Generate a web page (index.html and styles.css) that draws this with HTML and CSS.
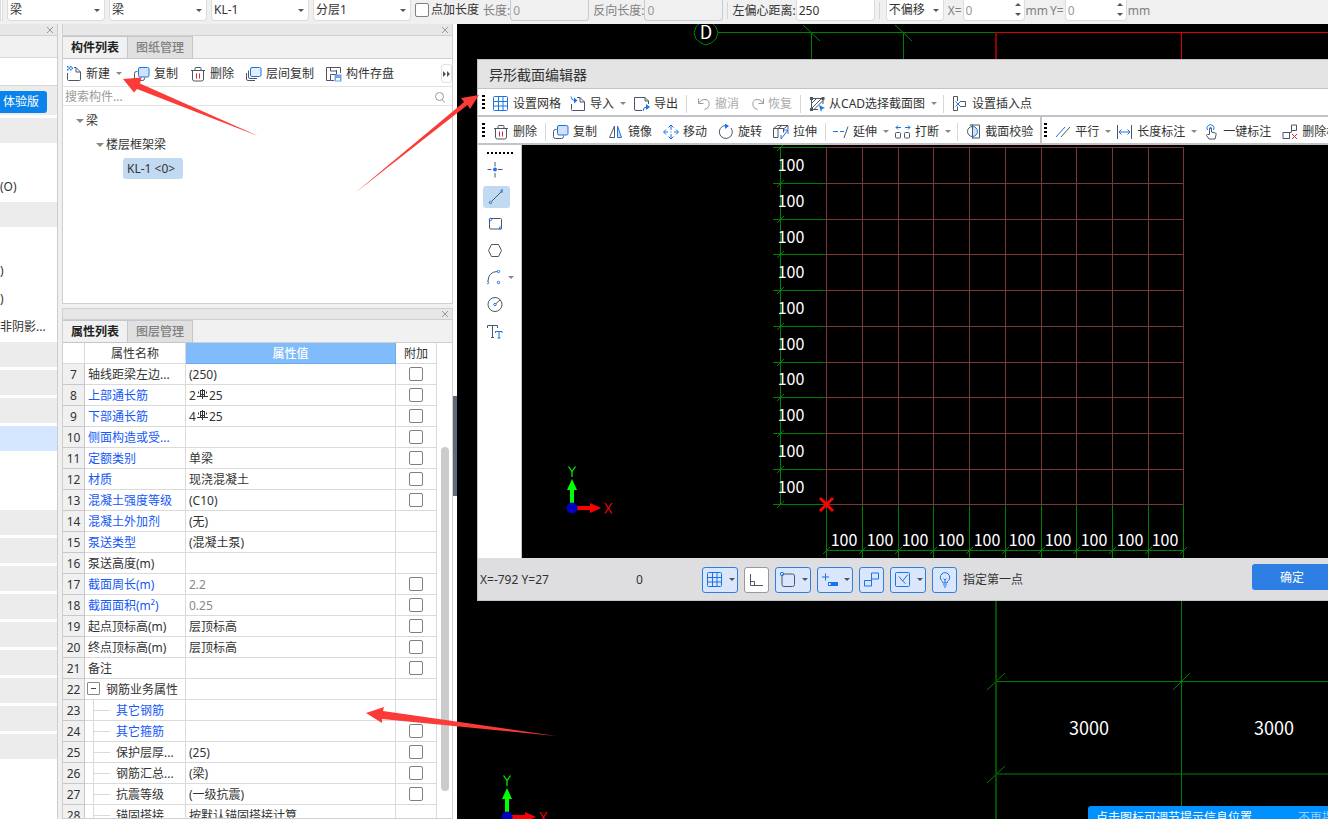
FILE: index.html
```
<!DOCTYPE html>
<html lang="zh-CN">
<head>
<meta charset="utf-8">
<title>异形截面编辑器</title>
<link rel="stylesheet" href="styles.css">
</head>
<body>
<svg class="defs" aria-hidden="true">
  <symbol id="i-new" viewBox="0 0 16 16"><path class="g" d="M1.500 7v6.500q0 1 1 1h11q1 0 1-1V6L10 1.500H8M10 1.500V6h4.500"/><path class="bf" d="M1 0h1.500v1.500H1zM4 0h1.500v1.500H4zM2.500 1.500H4V3H2.500zM1 3h1.500v1.500H1zM4 3h1.500v1.500H4zM5.500 1.500H7V3H5.500z"/></symbol>
  <symbol id="i-copy" viewBox="0 0 16 16"><path class="g" d="M3.500 5.500h-1q-2 0-2 2v5q0 2 2 2h6q2 0 2-2v-1"/><rect class="bl" x="4.500" y="1.500" width="10.500" height="9.500" rx="1.500"/></symbol>
  <symbol id="i-layers" viewBox="0 0 16 16"><path class="g" d="M.5 7v6q0 1.500 1.500 1.500h7M2.500 4.500v6.500q0 1.500 1.500 1.500h7"/><rect class="bl pale" x="4.500" y="1.500" width="10.500" height="9" rx="1.500"/></symbol>
  <symbol id="i-del" viewBox="0 0 16 16"><path class="g" d="M1 4.500h14M5 4V2.500q0-1 1-1h4q1 0 1 1V4M2.500 4.500V13q0 2 2 2h7q2 0 2-2V4.500"/><path class="r" d="M6.500 7.500v5M9.500 7.500v5"/></symbol>
  <symbol id="i-save" viewBox="0 0 16 16"><path class="g" d="M8 14.500H4.500V8.500M4.500 14.500h-4V1.500h14V7M4.500 1.500v3.500h6M4.500 8.500h6M10.500 4v4.500"/><path class="bs" d="M8.500 8.500h7v7h-7z"/><path fill="#fff" d="M10 12h4v2.500h-4z"/></symbol>
  <symbol id="i-grid" viewBox="0 0 16 16"><rect class="b" x=".5" y=".5" width="14" height="14" rx="1"/><path class="b" d="M5.500.5v14M10 .5v14M.5 5.500h14M.5 10h14"/></symbol>
  <symbol id="i-import" viewBox="0 0 16 16"><path class="g" d="M1.500 8v5.500q0 1 1 1h12V6L10 1.500H7M10 1.500V6h4.500"/><path class="b" d="M1 .5q0 4 4 4"/><path class="bf" d="M4 1.500 7.500 4.500 4 7.500z"/></symbol>
  <symbol id="i-export" viewBox="0 0 16 16"><path class="g" d="M8 14.500H2q-1.500 0-1.500-1.500V1.500H11L14.500 5v3M11 1.500V5h3.500"/><path class="b" d="M9 15q0-4 4-4"/><path class="bf" d="m12 8 4 3-4 3z"/></symbol>
  <symbol id="i-undo" viewBox="0 0 16 16"><path class="d" d="M3.500 2.500v5h5M3.500 7Q7 2.500 11 3.500q4 1.500 3 6Q13 13 9.500 13.500"/></symbol>
  <symbol id="i-redo" viewBox="0 0 16 16"><path class="d" d="M15.500 2.500v5h-5M15.500 7Q12 2.500 8 3.500q-4 1.500-3 6Q6 13 9.500 13.500"/></symbol>
  <symbol id="i-cad" viewBox="0 0 16 16"><path class="g" d="M3 2.500h10M2.500 3v10M14 3v5M3 13.500h6M2.500 7.500l5-5M2.500 12.500l10-10M5 13.500l9-9"/><path class="gf" d="M1 1h3v3H1zM12.500 1h3v3h-3zM1 12h3v3H1z"/><path class="bf" d="m10 9 6 3-3 1-1 3z"/></symbol>
  <symbol id="i-insert" viewBox="0 0 16 16"><path class="g" d="M5.500 5V.500h-4v14h4V10.500M8 5.500h5.500v5H8"/><path class="b" d="m3.500 5.500 5 5m0-5-5 5"/></symbol>
  <symbol id="i-mirror" viewBox="0 0 16 16"><path class="g" d="M6.500 2v11.500h-5z"/><path class="bl" d="M9.500 2v11.500h4z"/></symbol>
  <symbol id="i-move" viewBox="0 0 16 16"><path class="b" d="M8 1v5M8 10v5M1 8h4M11 8h4M5.500 3.500 8 1l2.500 2.500M5.500 12.500 8 15l2.500-2.500M3 5.500.5 8 3 10.500M13 5.500 15.500 8 13 10.500M8 7.500v1"/></symbol>
  <symbol id="i-rotate" viewBox="0 0 16 16"><path class="g" d="M7 1.500A6.500 6.500 0 1 0 13 4"/><path class="bf" d="m7-.5 4 2.500-4 3z"/></symbol>
  <symbol id="i-stretch" viewBox="0 0 16 16"><path class="g" d="M.5 4.500v9H5v-9zM.5 4.500l4-3h10.500v4M5 4.500l4-3M5 4.500h6M11 4.500 15 1.500M10.500 4.500v4"/><path class="b" d="m8 15 7-9M15 6v4M15 6h-4M8 15v-4"/></symbol>
  <symbol id="i-extend" viewBox="0 0 16 16"><path class="b" d="M0 7.500h5M7 7.500h4"/><path class="g" d="M15 2.500 11 14"/></symbol>
  <symbol id="i-break" viewBox="0 0 16 16"><path class="b" d="M1 3.500h5M10 3.500h5M3 1.500l-2 2 2 2M13 1.500l2 2-2 2"/><rect class="g" x=".5" y="8.500" width="5" height="5.500" rx="1"/><rect class="g" x="9.500" y="8.500" width="5" height="5.500" rx="1"/></symbol>
  <symbol id="i-check" viewBox="0 0 16 16"><path class="bl" d="M7.500 2.500a5 5 0 0 1 0 10z"/><path class="g" d="M7.500 12.500a5 5 0 1 1 0-10M7.500.5v14M5 1.500V1h9.500v13H7.500"/></symbol>
  <symbol id="i-parallel" viewBox="0 0 16 16"><path class="b" d="M1 13 10 3"/><path class="g" d="m6 13 9-10"/></symbol>
  <symbol id="i-length" viewBox="0 0 16 16"><path class="g" d="M.5 1v14M14.500 1v14"/><path class="b" d="M2 8h11M4.500 5.500 2 8l2.500 2.500M10.500 5.500 13 8l-2.500 2.500"/></symbol>
  <symbol id="i-hand" viewBox="0 0 16 16"><path class="g" d="M6.500 10.500v-6q0-1 1-1t1 1V8l4 1q1 .5.500 2l-1 4H6L3.500 11.500q0-1 1-1z"/><path class="b" d="M4.500 6a3.500 3.500 0 1 1 6 0M6.500 4.500h2"/></symbol>
  <symbol id="i-dimdel" viewBox="0 0 16 16"><path class="g" d="M9.500 1h5v5.500h-5zM9.500 6.500v2M9 8.500H1v6h7M7.500 8.500v6"/><path class="r" d="m10 10 5 5m0-5-5 5"/></symbol>
  <symbol id="i-search" viewBox="0 0 16 16"><circle class="d" cx="7.500" cy="7.500" r="4"/><path class="d" d="m10.500 11 2 2.500"/></symbol>
  <symbol id="i-close" viewBox="0 0 8 8"><path class="d" d="m1 1 6 6m0-6L1 7"/></symbol>
  <symbol id="i-point" viewBox="0 0 16 16"><path class="g" d="M8 0v4.500M8 11v4.500M.5 7.500h4M11 7.500h4.500"/><circle class="bf" cx="8" cy="7.500" r="2"/></symbol>
  <symbol id="i-line" viewBox="0 0 16 16"><path class="g" d="M4.500 12.500 14 3"/><circle class="b" cx="3.500" cy="13.500" r="1.200"/><circle class="b" cx="15" cy="2" r="1.200"/></symbol>
  <symbol id="i-rect" viewBox="0 0 16 16"><rect class="g" x="2.500" y="2.500" width="12" height="10.500" rx="1"/><circle class="b" cx="3.500" cy="3.500" r="1.200"/><circle class="b" cx="13.500" cy="12" r="1.200"/></symbol>
  <symbol id="i-hex" viewBox="0 0 16 16"><path class="g" d="M4.500 1.500h7l3 6-3 6h-7l-3-6z"/></symbol>
  <symbol id="i-arc" viewBox="0 0 16 16"><path class="g" d="M1 11Q1.500 2 10 1.500"/><circle class="b" cx=".5" cy="12.500" r="1.200"/><circle class="b" cx="11.500" cy="1.500" r="1.200"/><circle class="b" cx="11.500" cy="12.500" r="1.200"/></symbol>
  <symbol id="i-circle" viewBox="0 0 16 16"><circle class="g" cx="8" cy="7.500" r="7"/><path class="g" d="m9 6.500 4-3.500"/><circle class="b" cx="8" cy="7.500" r="1.200"/></symbol>
  <symbol id="i-text" viewBox="0 0 16 16"><path class="g" d="M.5 4V1.500h10V4M5.500 1.500v12M4 13.500h3"/><path class="b" d="M8.500 9V7.500h6.500V9M12 7.500v6.500M10.500 14h3"/></symbol>
  <symbol id="i-ortho" viewBox="0 0 16 16"><path class="g" d="M1.500 2v11.500H14M1.500 9.500h4v4"/></symbol>
  <symbol id="i-snap" viewBox="0 0 16 16"><rect class="g" x="2" y="2" width="12.500" height="12.500" rx="2"/><circle class="b" cx="2" cy="2" r="1.700"/></symbol>
  <symbol id="i-input" viewBox="0 0 16 16"><path class="b" d="M0 5h7M3.500 1.500v7"/><path class="bf" d="M6 10h10v4H6z"/><path fill="#fff" d="M7 11h1.500v2H7z"/></symbol>
  <symbol id="i-link" viewBox="0 0 16 16"><path class="b" d="M7.500 1h7V7h-7zM7.500 7v2M.5 8.500h7v5.500h-7z"/></symbol>
  <symbol id="i-angle" viewBox="0 0 16 16"><rect class="b" x=".5" y=".5" width="14" height="14" rx="1"/><path class="b" d="M4 4.500 7.500 9l5.500-6.500M7.500 9l3 2.500"/></symbol>
  <symbol id="i-bulb" viewBox="0 0 16 16"><path class="b" d="M6 11q0-1.500-1.500-2.500a4.700 4.700 0 1 1 7 0Q10 9.500 10 11zM6 13h4M7 15h2M8 11V8M6.500 6.500 8 8l1.500-1.500"/></symbol>
  <symbol id="i-rebar" viewBox="0 0 11 10"><path d="M3 1.500h5M1.500 2.500v2M9.500 2.500v2M3 5.500h5M3.500 1v7M5.500 0v10M7.500 1v7M0 7.500h11" fill="none" stroke="#333"/></symbol>
  <symbol id="i-axes" viewBox="0 0 60 60">
    <path d="M13 46V28" stroke="#0f0" stroke-width="4"/><path d="m13 18 5 11H8z" fill="#0f0"/><path d="m9.500 5.500 3.500 5 3.500-5M13 10.500V16" fill="none" stroke="#0f0" stroke-width="1.200"/>
    <path d="M18 47h14" stroke="#f00" stroke-width="4"/><path d="M31 42l11 5-11 5z" fill="#f00"/><path d="m46 42 7 10.500m0-10.500-7 10.500" stroke="#f00" stroke-width="1.200"/>
    <circle cx="13" cy="47" r="5.500" fill="#0000c0"/>
  </symbol>
</svg>

<header class="topbar">
  <span class="pick stub"></span>
  <span class="pick"><select aria-label="构件大类"><option>梁</option></select></span>
  <span class="pick"><select aria-label="构件类型"><option>梁</option></select></span>
  <span class="pick"><select aria-label="构件"><option>KL-1</option></select></span>
  <span class="pick"><select aria-label="分层"><option>分层1</option></select></span>
  <label class="tick"><input type="checkbox" class="box">点加长度</label>
  <label class="field muted">长度:<input type="text" value="0" disabled></label>
  <label class="field muted">反向长度:<input type="text" value="0" disabled></label>
  <span class="rule"></span>
  <label class="field">左偏心距离:<input type="text" value="250"></label>
  <span class="rule"></span>
  <span class="pick small"><select aria-label="偏移方式"><option>不偏移</option></select></span>
  <label class="field muted spin">X=<input type="text" value="0"><i class="arrows"></i>mm</label>
  <label class="field muted spin">Y=<input type="text" value="0"><i class="arrows"></i>mm</label>
</header>

<main class="work">
  <nav class="rail">
    <div class="dock"><button class="x" aria-label="关闭"><svg><use href="#i-close"/></svg></button></div>
    <div class="strip"></div>
    <div class="blank"></div>
    <ul class="modules">
      <li class="band"><button class="trial">体验版</button></li>
      <li class="band"></li><li></li><li>(O)</li><li class="band"></li>
      <li></li><li>)</li><li>)</li><li>非阴影...</li>
      <li class="band"></li><li class="band"></li><li class="band"></li><li class="on"></li>
      <li></li><li></li>
      <li class="band"></li><li class="band"></li><li class="band"></li><li class="band"></li><li class="band"></li>
      <li class="band"></li><li class="band"></li><li class="band"></li><li class="band"></li>
    </ul>
  </nav>

  <div class="panels">
    <section class="panel">
      <div class="dock"><button class="x" aria-label="关闭"><svg><use href="#i-close"/></svg></button></div>
      <div class="tabs"><button class="tab active">构件列表</button><button class="tab">图纸管理</button></div>
      <div class="tools">
        <button class="btn"><svg><use href="#i-new"/></svg>新建<i class="caret"></i></button>
        <button class="btn"><svg><use href="#i-copy"/></svg>复制</button>
        <button class="btn"><svg><use href="#i-del"/></svg>删除</button>
        <button class="btn"><svg><use href="#i-layers"/></svg>层间复制</button>
        <button class="btn"><svg><use href="#i-save"/></svg>构件存盘</button>
        <button class="more" aria-label="更多"><i></i><i></i></button>
      </div>
      <div class="search"><input type="search" placeholder="搜索构件..." aria-label="搜索构件"><svg><use href="#i-search"/></svg></div>
      <ul class="tree">
        <li><i class="caret"></i>梁
          <ul><li><i class="caret"></i>楼层框架梁
            <ul><li><span class="picked">KL-1 &lt;0&gt;</span></li></ul></li></ul></li>
      </ul>
    </section>

    <section class="panel props">
      <div class="dock"><button class="x" aria-label="关闭"><svg><use href="#i-close"/></svg></button></div>
      <div class="tabs"><button class="tab active">属性列表</button><button class="tab">图层管理</button></div>
      <div class="sheet">
        <table>
          <colgroup><col class="c-no"><col class="c-name"><col><col class="c-add"></colgroup>
          <thead><tr><th></th><th>属性名称</th><th class="hot">属性值</th><th>附加</th></tr></thead>
          <tbody>
            <tr><th>7</th><td>轴线距梁左边...</td><td>(250)</td><td><input type="checkbox" class="box" aria-label="附加 7"></td></tr>
            <tr class="key"><th>8</th><td>上部通长筋</td><td>2<svg class="rebar"><use href="#i-rebar"/></svg>25</td><td><input type="checkbox" class="box" aria-label="附加 8"></td></tr>
            <tr class="key"><th>9</th><td>下部通长筋</td><td>4<svg class="rebar"><use href="#i-rebar"/></svg>25</td><td><input type="checkbox" class="box" aria-label="附加 9"></td></tr>
            <tr class="key"><th>10</th><td>侧面构造或受...</td><td></td><td><input type="checkbox" class="box" aria-label="附加 10"></td></tr>
            <tr class="key"><th>11</th><td>定额类别</td><td>单梁</td><td><input type="checkbox" class="box" aria-label="附加 11"></td></tr>
            <tr class="key"><th>12</th><td>材质</td><td>现浇混凝土</td><td><input type="checkbox" class="box" aria-label="附加 12"></td></tr>
            <tr class="key"><th>13</th><td>混凝土强度等级</td><td>(C10)</td><td><input type="checkbox" class="box" aria-label="附加 13"></td></tr>
            <tr class="key"><th>14</th><td>混凝土外加剂</td><td>(无)</td><td></td></tr>
            <tr class="key"><th>15</th><td>泵送类型</td><td>(混凝土泵)</td><td></td></tr>
            <tr><th>16</th><td>泵送高度(m)</td><td></td><td></td></tr>
            <tr class="key"><th>17</th><td>截面周长(m)</td><td class="dim">2.2</td><td><input type="checkbox" class="box" aria-label="附加 17"></td></tr>
            <tr class="key"><th>18</th><td>截面面积(m²)</td><td class="dim">0.25</td><td><input type="checkbox" class="box" aria-label="附加 18"></td></tr>
            <tr><th>19</th><td>起点顶标高(m)</td><td>层顶标高</td><td><input type="checkbox" class="box" aria-label="附加 19"></td></tr>
            <tr><th>20</th><td>终点顶标高(m)</td><td>层顶标高</td><td><input type="checkbox" class="box" aria-label="附加 20"></td></tr>
            <tr><th>21</th><td>备注</td><td></td><td><input type="checkbox" class="box" aria-label="附加 21"></td></tr>
            <tr><th>22</th><td class="group"><button class="fold" aria-label="折叠"></button>钢筋业务属性</td><td></td><td></td></tr>
            <tr class="key child"><th>23</th><td>其它钢筋</td><td></td><td></td></tr>
            <tr class="key child"><th>24</th><td>其它箍筋</td><td></td><td><input type="checkbox" class="box" aria-label="附加 24"></td></tr>
            <tr class="child"><th>25</th><td>保护层厚...</td><td>(25)</td><td><input type="checkbox" class="box" aria-label="附加 25"></td></tr>
            <tr class="child"><th>26</th><td>钢筋汇总...</td><td>(梁)</td><td><input type="checkbox" class="box" aria-label="附加 26"></td></tr>
            <tr class="child"><th>27</th><td>抗震等级</td><td>(一级抗震)</td><td><input type="checkbox" class="box" aria-label="附加 27"></td></tr>
            <tr class="child"><th>28</th><td>锚固搭接</td><td>按默认锚固搭接计算</td><td></td></tr>
          </tbody>
        </table>
        <div class="scroll"><i></i></div>
      </div>
    </section>
  </div>

  <div class="splitter"><i></i></div>

  <section class="canvas">
    <svg class="drawing">
      <g transform="translate(-457 -24)">
        <path class="ln" d="M701 22h10l5 5 2 6-2 6-5 4-5 2-5-2-5-4-2-6 2-6zM718 32.500h278M811.500 32.500V60M903.500 32.500V60M803 25l17 16M895 25l17 16"/>
        <path class="hot-ln" d="M996 32.500h600M1181.500 32.500V60"/>
        <path class="hot-dim" d="M996 32.500V60"/>
        <path class="ln" d="M1181.500 600v260M996 681.500h600M1173 690l17-17M987 690l18-17M987 783l18-17M996 774h600"/>
        <path class="ln dimmed" d="M996 600v260"/>
        <text class="big" x="706" y="39">D</text>
        <text class="big" x="1089" y="735">3000</text>
        <text class="big" x="1274" y="735">3000</text>
        <use href="#i-axes" x="494" y="770" width="60" height="60"/>
      </g>
    </svg>

    <div class="dialog" role="dialog" aria-label="异形截面编辑器">
      <h1>异形截面编辑器</h1>
      <div class="bar file">
        <i class="grip"></i>
        <button class="btn"><svg><use href="#i-grid"/></svg>设置网格</button>
        <button class="btn"><svg><use href="#i-import"/></svg>导入<i class="caret"></i></button>
        <button class="btn"><svg><use href="#i-export"/></svg>导出</button>
        <i class="sep"></i>
        <button class="btn" disabled><svg><use href="#i-undo"/></svg>撤消</button>
        <button class="btn" disabled><svg><use href="#i-redo"/></svg>恢复</button>
        <i class="sep"></i>
        <button class="btn"><svg><use href="#i-cad"/></svg>从CAD选择截面图<i class="caret"></i></button>
        <i class="sep"></i>
        <button class="btn"><svg><use href="#i-insert"/></svg>设置插入点</button>
      </div>
      <div class="bar">
        <i class="grip"></i>
        <button class="btn"><svg><use href="#i-del"/></svg>删除</button>
        <i class="sep"></i>
        <button class="btn"><svg><use href="#i-copy"/></svg>复制</button>
        <button class="btn"><svg><use href="#i-mirror"/></svg>镜像</button>
        <button class="btn"><svg><use href="#i-move"/></svg>移动</button>
        <button class="btn"><svg><use href="#i-rotate"/></svg>旋转</button>
        <button class="btn"><svg><use href="#i-stretch"/></svg>拉伸</button>
        <i class="sep"></i>
        <button class="btn"><svg><use href="#i-extend"/></svg>延伸<i class="caret"></i></button>
        <button class="btn"><svg><use href="#i-break"/></svg>打断<i class="caret"></i></button>
        <i class="sep"></i>
        <button class="btn"><svg><use href="#i-check"/></svg>截面校验</button>
        <i class="wall"></i>
        <i class="grip"></i>
        <button class="btn"><svg><use href="#i-parallel"/></svg>平行<i class="caret"></i></button>
        <button class="btn"><svg><use href="#i-length"/></svg>长度标注<i class="caret"></i></button>
        <button class="btn"><svg><use href="#i-hand"/></svg>一键标注</button>
        <button class="btn"><svg><use href="#i-dimdel"/></svg>删除标注</button>
      </div>
      <div class="stage">
        <div class="palette">
          <i class="grip wide"></i>
          <button aria-label="点"><svg><use href="#i-point"/></svg></button>
          <button aria-label="直线" class="on"><svg><use href="#i-line"/></svg></button>
          <button aria-label="矩形"><svg><use href="#i-rect"/></svg></button>
          <button aria-label="多边形"><svg><use href="#i-hex"/></svg></button>
          <button aria-label="弧线"><svg><use href="#i-arc"/></svg><i class="caret"></i></button>
          <button aria-label="圆"><svg><use href="#i-circle"/></svg></button>
          <button aria-label="文字"><svg><use href="#i-text"/></svg></button>
        </div>
        <svg class="drawing">
          <path class="mesh" d="M304.500 2.500h357M304.500 38.500h357M304.500 74.500h357M304.500 109.500h357M304.500 145.500h357M304.500 181.500h357M304.500 217.500h357M304.500 252.500h357M304.500 288.500h357M304.500 324.500h357M304.500 359.500h357M304.500 2.500v357M340.500 2.500v357M376.500 2.500v357M411.500 2.500v357M447.500 2.500v357M483.500 2.500v357M519.500 2.500v357M554.500 2.500v357M590.500 2.500v357M626.500 2.500v357M661.500 2.500v357"/>
          <path class="ln" d="M258.500 2.500v357M251 2.500h53M251 38.500h53M251 74.500h53M251 109.500h53M251 145.500h53M251 181.500h53M251 217.500h53M251 252.500h53M251 288.500h53M251 324.500h53M251 359.500h53"/>
          <path class="ln" d="M304.500 405.500h357M304.500 359.500V420M340.500 359.500V420M376.500 359.500V420M411.500 359.500V420M447.500 359.500V420M483.500 359.500V420M519.500 359.500V420M554.500 359.500V420M590.500 359.500V420M626.500 359.500V420M661.500 359.500V420"/>
          <path class="ln" d="m255 6 7-7m-7 43 7-7m-7 43 7-7m-7 42 7-7m-7 43 7-7m-7 43 7-7m-7 43 7-7m-7 42 7-7m-7 43 7-7m-7 43 7-7m-7 42 7-7M301 409l7-7m29 7 7-7m29 7 7-7m28 7 7-7m29 7 7-7m29 7 7-7m29 7 7-7m28 7 7-7m29 7 7-7m29 7 7-7m28 7 7-7"/>
          <path class="origin" d="m298 353 13 13m0-13-13 13"/>
          <g class="dims">
            <text x="269" y="26">100</text><text x="269" y="62">100</text><text x="269" y="98">100</text><text x="269" y="133">100</text><text x="269" y="169">100</text><text x="269" y="205">100</text><text x="269" y="240">100</text><text x="269" y="276">100</text><text x="269" y="312">100</text><text x="269" y="348">100</text>
            <text x="322" y="401">100</text><text x="358" y="401">100</text><text x="393" y="401">100</text><text x="429" y="401">100</text><text x="465" y="401">100</text><text x="500" y="401">100</text><text x="536" y="401">100</text><text x="572" y="401">100</text><text x="608" y="401">100</text><text x="643" y="401">100</text>
          </g>
          <use href="#i-axes" x="37" y="316" width="60" height="60"/>
        </svg>
      </div>
      <footer class="status">
        <span class="coord">X=-792 Y=27</span>
        <span class="len">0</span>
        <button class="mode" aria-label="网格"><svg><use href="#i-grid"/></svg><i class="caret"></i></button>
        <button class="mode off" aria-label="正交"><svg><use href="#i-ortho"/></svg></button>
        <button class="mode" aria-label="捕捉"><svg><use href="#i-snap"/></svg><i class="caret"></i></button>
        <button class="mode" aria-label="动态输入"><svg><use href="#i-input"/></svg><i class="caret"></i></button>
        <button class="mode" aria-label="连续"><svg><use href="#i-link"/></svg></button>
        <button class="mode" aria-label="角度"><svg><use href="#i-angle"/></svg><i class="caret"></i></button>
        <button class="mode" aria-label="提示"><svg><use href="#i-bulb"/></svg></button>
        <span>指定第一点</span>
        <button class="ok">确定</button>
      </footer>
    </div>

    <div class="toast"><span>点击图标可调节提示信息位置</span><a href="#">不再提示</a></div>
  </section>
</main>

<svg class="marks" aria-hidden="true">
  <path d="m123 79 18.500-1.500-1.500 6L258 136l-121-47-3 3.500z"/>
  <path d="m479 95-9 14-2.500-4L355 193l109-91-3-4z"/>
  <path d="m366 713 18-6-1 4 173 25-174-17v4z"/>
</svg>
</body>
</html>
```
FILE: styles.css
```
* { box-sizing: border-box; }
html, body { height: 100%; }
body {
  margin: 0;
  display: flex;
  flex-direction: column;
  overflow: hidden;
  position: relative;
  background: #f0f0f0;
  color: #333;
  font: 12px/20px "Noto Sans", "Noto Sans CJK SC", sans-serif;
}
button, input, select { font: inherit; color: inherit; margin: 0; padding: 0; border: 0; background: none; }
ul { list-style: none; margin: 0; padding: 0; }
i { display: block; flex: none; }
.defs { position: absolute; width: 0; height: 0; }

/* icon strokes */
.g { fill: none; stroke: #4d5566; }
.gf { fill: #4d5566; }
.b { fill: none; stroke: #1a73e8; }
.bf { fill: #1a73e8; }
.bs { fill: #6ea3f0; }
.bl { fill: #cfe1fb; stroke: #1a73e8; }
.pale { fill: #e3eefc; }
.r { fill: none; stroke: #e0202a; }
.d { fill: none; stroke: #999; }

.caret { width: 0; height: 0; border: 3px solid transparent; border-top: 3px solid #888; border-bottom: 0; }

/* top option bar */
.topbar { flex: none; height: 24px; display: flex; align-items: flex-start; gap: 4px; white-space: nowrap; }
.topbar > * { flex: none; }
.pick { position: relative; width: 98px; height: 21px; }
.pick.stub { width: 3px; }
.pick.stub, .pick select, .field input { background: #fff; border: 1px solid #dcdcdc; border-top: 0; border-radius: 0 0 4px 4px; }
.pick select { appearance: none; width: 100%; height: 21px; padding-left: 2px; }
.pick::after { content: ""; position: absolute; right: 5px; top: 9px; border: 3px solid transparent; border-top-color: #555; border-bottom: 0; }
.pick.stub::after { display: none; }
.pick.small { width: 58px; margin-left: 2px; }
.box { appearance: none; flex: none; display: block; width: 14px; height: 14px; border: 1px solid #808080; border-radius: 2px; background: #fff; }
.tick { display: flex; align-items: center; gap: 2px; }
.field { display: flex; align-items: center; position: relative; }
.field input { width: 79px; height: 21px; padding-left: 2px; }
.muted { color: #808080; }
.muted input { color: #999; }
.field input:disabled { background: #f0f0f0; border-color: #c5cad6; }
.field.spin { gap: 1px; margin-right: -2px; }
.spin input { width: 62px; }
.arrows { position: absolute; right: 27px; top: 3px; width: 6px; height: 14px; }
.arrows::before, .arrows::after { content: ""; display: block; border: 3px solid transparent; }
.arrows::before { border-bottom-color: #555; border-top: 0; }
.arrows::after { border-top-color: #555; border-bottom: 0; margin-top: 7px; }
.rule { width: 1px; height: 17px; margin-top: 2px; background: #d5d5d5; }

.work { flex: 1; min-height: 0; display: flex; }

/* left module rail */
.rail { flex: none; width: 58px; overflow: hidden; background: #fff; border-right: 1px solid #ccc; }
.dock { height: 12px; display: flex; align-items: center; justify-content: flex-end; padding-right: 3px; background: #e7e7e7; border-bottom: 1px solid #d0d0d0; }
.x { display: block; width: 8px; height: 8px; }
.x svg { display: block; width: 8px; height: 8px; }
.strip { height: 22px; background: #f1f1f1; border-bottom: 1px solid #d8d8d8; }
.blank { height: 28px; border-bottom: 1px solid #d8d8d8; }
.modules { display: flex; flex-direction: column; gap: 3px; white-space: nowrap; }
.modules li { height: 25px; flex: none; line-height: 25px; }
.modules .band { background: #ececec; }
.modules li:first-child { height: 29px; padding-top: 5px; }
.modules .on { background: #d4e7ff; }
.trial { display: block; width: 47px; height: 22px; padding-left: 3px; text-align: left; line-height: 22px; color: #fff; background: #0a84ea; border-radius: 0 3px 3px 0; }

/* docked panels */
.panels { flex: none; width: 391px; margin-left: 4px; display: flex; flex-direction: column; gap: 4px; }
.panel { background: #fff; border: 1px solid #d0d0d0; border-top: 0; }
.tabs { display: flex; height: 23px; background: #f1f1f1; border-bottom: 1px solid #d0d0d0; }
.tab { width: 66px; height: 23px; color: #808080; background: #e0e0e0; border: 1px solid #c3c6cc; font-weight: 500; }
.tab.active { width: 64px; color: #222; background: #f1f1f1; font-weight: 700; border-right: 0; border-left: 0; }
.tools { height: 28px; display: flex; align-items: center; gap: 12px; padding: 2px 0 0 3px; border-bottom: 1px solid #e3e3e3; }
.btn { flex: none; display: flex; align-items: center; gap: 4px; white-space: nowrap; }
.btn svg { display: block; width: 16px; height: 16px; overflow: visible; }
.btn .caret { margin-left: 2px; }
.btn:disabled { color: #aaa; }
.more { display: flex; align-items: center; gap: 1px; justify-content: center; width: 11px; height: 19px; margin-left: auto; border: 1px solid #e0e0e0; border-radius: 3px; }
.more i { border: 3px solid transparent; border-left: 3px solid #4d5566; border-right: 0; }
.search { height: 19px; display: flex; align-items: center; padding: 1px 4px 0 2px; border-bottom: 1px solid #e3e3e3; }
.search input { flex: 1; height: 18px; outline: 0; }
.search input::placeholder { color: #999; opacity: 1; }
.search svg { width: 16px; height: 16px; }
.tree { height: 197px; padding: 3px 0 0 13px; line-height: 24px; }
.tree ul { padding-left: 20px; }
.tree ul ul { padding-left: 27px; }
.tree .caret { display: inline-block; border-width: 4px; border-bottom: 0; margin: 0 2px 2px 0; }
.picked { display: inline-block; height: 21px; line-height: 21px; padding: 0 8px 0 4px; background: #c2d9f2; border-radius: 3px; }

.props { flex: 1; min-height: 0; display: flex; flex-direction: column; }
.props .dock { border-top: 1px solid #d0d0d0; }
.props .dock, .props .tabs { flex: none; }
.sheet { flex: 1; min-height: 0; overflow: hidden; display: flex; }
table { width: 374px; flex: none; align-self: flex-start; table-layout: fixed; border-collapse: separate; border-spacing: 0; }
.c-no { width: 22px; }
.c-name { width: 101px; }
.c-add { width: 41px; }
th, td { height: 21px; padding: 2px 3px 0; line-height: 18px; font-weight: 400; text-align: left; white-space: nowrap; border-right: 1px solid #dadada; border-bottom: 1px solid #dadada; overflow: hidden; }
th { text-align: center; padding: 2px 0 0; }
td:last-child { padding-top: 0; }
tbody th { background: #f0f0f0; border-color: #c8c8c8; }
th.hot { background: #80bbfb; color: #fff; border-color: #6aa9ee; font-weight: 500; }
.key td:nth-child(2) { color: #1458f5; }
td .box { margin: 0 auto; }
.dim { color: #888; }
.rebar { width: 11px; height: 10px; margin: 0 1px 1px; vertical-align: baseline; }
.fold { float: left; position: relative; width: 13px; height: 13px; margin: 1px 6px 0 -1px; border: 1px solid #888; border-radius: 1px; background: #fff; }
.fold::after { content: ""; position: absolute; left: 3px; right: 3px; top: 5px; height: 1px; background: #444; }
.child td:nth-child(2) { position: relative; padding-left: 31px; }
.child td:nth-child(2)::before { content: ""; position: absolute; left: 8px; top: 0; width: 17px; height: 10px; border-bottom: 1px solid #dadada; }
.child td:nth-child(2)::after { content: ""; position: absolute; left: 8px; top: 0; bottom: 0; width: 1px; background: #dadada; }
.scroll { flex: 1; padding: 104px 3px 27px 4px; }
.scroll i { height: 100%; background: #cbcbcb; border-radius: 4px; }

.splitter { flex: none; width: 4px; padding-top: 372px; background: #fff; }
.splitter i { height: 100px; background: #5f6b7a; }

/* drawing area */
.canvas { flex: 1; min-width: 0; position: relative; overflow: hidden; background: #000; }
.drawing { display: block; width: 100%; height: 100%; background: #000; }
.ln { fill: none; stroke: #008000; }
.dimmed { stroke: #005000; stroke-width: 2; }
.hot-ln { fill: none; stroke: #e00000; }
.hot-dim { fill: none; stroke: #900000; stroke-width: 2; }
.mesh { fill: none; stroke: #7a3838; }
.origin { stroke: #f00; stroke-width: 3; fill: none; }
.drawing text { fill: #fff; text-anchor: middle; font-family: "Noto Sans CJK SC", sans-serif; font-size: 16px; }
.drawing .big { font-size: 18px; }

/* section editor window */
.dialog { position: absolute; left: 20px; top: 35px; right: -24px; border: 1px solid #c0c4c9; background: #fff; }
.dialog h1 { margin: 0; height: 29px; padding-left: 11px; font-size: 14px; line-height: 29px; font-weight: 400; background: #e4e4e4; border-bottom: 1px solid #c0c4c9; }
.bar { display: flex; align-items: center; gap: 8px; height: 28px; padding-top: 3px; overflow: hidden; border-bottom: 2px solid #c0c4c9; }
.bar .btn + .btn { margin-left: 3px; }
.bar .btn:has(.caret) { margin-right: -2px; }
.bar.file .btn + .btn { margin-left: 1px; }
.bar .btn:has(.caret) + .btn { margin-left: 0; }
.bar.file .btn:has(.caret) + .btn { margin-left: 2px; }
.grip { width: 3px; height: 14px; margin: -3px 0 0 4px; background: repeating-linear-gradient(#000 0 2px, transparent 2px 4px); }
.grip.wide { width: 27px; height: 2px; margin: 6px 0 0 4px; background: repeating-linear-gradient(90deg, #000 0 2px, transparent 2px 4px); }
.sep { width: 1px; height: 18px; margin-right: -1px; background: #d8d8d8; }
.file .sep { margin-right: 0; }
.wall { width: 2px; height: 28px; margin: -3px -10px 0 -1px; background: #c0c4c9; }
.stage { display: flex; height: 413px; }
.palette { flex: none; width: 44px; padding: 1px 0 0 5px; display: flex; flex-direction: column; gap: 5px; border-right: 1px solid #c0c4c9; }
.palette button { flex: none; position: relative; width: 27px; height: 22px; border-radius: 3px; display: flex; align-items: center; padding-left: 4px; }
.palette .on { background: #c2d9f2; }
.palette svg { width: 16px; height: 16px; overflow: visible; }
.palette .caret { position: absolute; right: -4px; top: 9px; }
.stage .drawing { flex: 1; width: auto; }
.status { height: 42px; display: flex; align-items: center; gap: 6px; padding: 1px 19px 0 2px; background: #dedee0; }
.coord { width: 150px; }
.len { width: 60px; }
.mode { flex: none; display: flex; align-items: center; gap: 6px; height: 26px; padding: 0 3px 0 4px; border: 1px solid #2f7fe0; border-radius: 3px; background: #d9e6fb; }
.mode svg { display: block; width: 16px; height: 16px; overflow: visible; }
.mode .caret { border-top-color: #555; margin-right: -1px; }
.mode.off { background: #fff; border-color: #999; }
.ok { width: 80px; height: 26px; padding-top: 1px; margin: -5px 0 0 auto; color: #fff; background: #2d7fe3; border-radius: 3px; }

.toast { position: absolute; left: 631px; right: 0; bottom: -11px; height: 24px; padding-left: 8px; display: flex; gap: 46px; align-items: center; white-space: nowrap; overflow: hidden; color: #fff; background: #0090ff; border-radius: 3px 0 0 0; }
.toast a { color: #8fd0ff; text-decoration: none; }

/* callout arrows */
.marks { position: absolute; inset: 0; width: 100%; height: 100%; pointer-events: none; fill: #fb3b38; }
```
